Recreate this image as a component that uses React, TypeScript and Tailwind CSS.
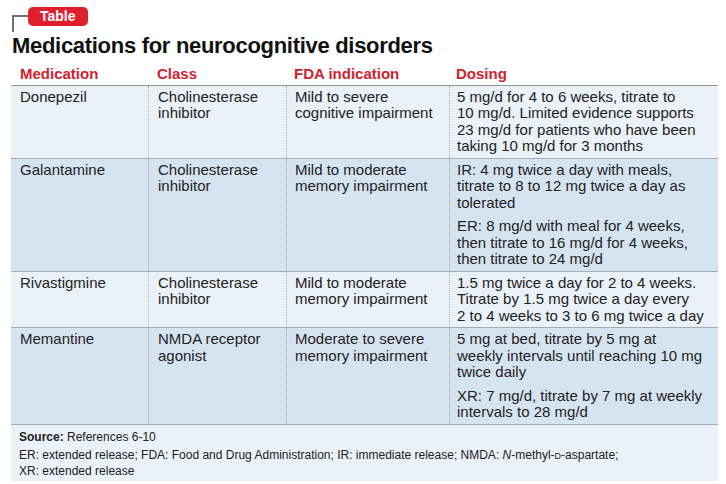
import React from 'react'

type Row = {
    med: string
    cls: string[]
    fda: string[]
    dosing: string[][]
    dark?: boolean
}

const rows: Row[] = [
    {
        med: 'Donepezil',
        cls: ['Cholinesterase', 'inhibitor'],
        fda: ['Mild to severe', 'cognitive impairment'],
        dosing: [
            [
                '5 mg/d for 4 to 6 weeks, titrate to',
                '10 mg/d. Limited evidence supports',
                '23 mg/d for patients who have been',
                'taking 10 mg/d for 3 months',
            ],
        ],
    },
    {
        med: 'Galantamine',
        cls: ['Cholinesterase', 'inhibitor'],
        fda: ['Mild to moderate', 'memory impairment'],
        dosing: [
            [
                'IR: 4 mg twice a day with meals,',
                'titrate to 8 to 12 mg twice a day as',
                'tolerated',
            ],
            [
                'ER: 8 mg/d with meal for 4 weeks,',
                'then titrate to 16 mg/d for 4 weeks,',
                'then titrate to 24 mg/d',
            ],
        ],
        dark: true,
    },
    {
        med: 'Rivastigmine',
        cls: ['Cholinesterase', 'inhibitor'],
        fda: ['Mild to moderate', 'memory impairment'],
        dosing: [
            [
                '1.5 mg twice a day for 2 to 4 weeks.',
                'Titrate by 1.5 mg twice a day every',
                '2 to 4 weeks to 3 to 6 mg twice a day',
            ],
        ],
    },
    {
        med: 'Memantine',
        cls: ['NMDA receptor', 'agonist'],
        fda: ['Moderate to severe', 'memory impairment'],
        dosing: [
            [
                '5 mg at bed, titrate by 5 mg at',
                'weekly intervals until reaching 10 mg',
                'twice daily',
            ],
            ['XR: 7 mg/d, titrate by 7 mg at weekly', 'intervals to 28 mg/d'],
        ],
        dark: true,
    },
]

function Lines({ lines }: { lines: string[] }) {
    return (
        <>
            {lines.map((l) => (
                <div key={l} className="whitespace-nowrap">
                    {l}
                </div>
            ))}
        </>
    )
}

export default function App() {
    return (
        <div className="w-[726px] h-[484px] bg-white font-['Liberation_Sans',Arial,sans-serif] text-[#222]">
            {/* Label + bracket */}
            <div className="flex pl-[12px] pt-[7px]">
                <div className="mt-[8px] w-[16px] h-[17px] border-l-2 border-t-2 border-[#707070]" />
                <div className="h-[19px] px-[12px] rounded-[5px] bg-[#e01f2d] text-white text-[14px] font-bold leading-[19px]">
                    Table
                </div>
            </div>

            {/* Title */}
            <h1 className="mt-[1px] pl-[12px] text-[22px] font-bold leading-[25px] text-[#111] tracking-[-0.3px]">
                Medications for neurocognitive disorders
            </h1>

            {/* Table */}
            <div className="ml-[11px] mt-[3px] w-[707px] text-[15px] leading-[16.5px]">
                <div className="grid grid-cols-[137px_138px_163px_269px] border-b border-[#8e959c] pt-[5px] pb-[2px] font-bold text-[#d11f2f]">
                    <div className="pl-[9px]">Medication</div>
                    <div className="pl-[9px]">Class</div>
                    <div className="pl-[8px]">FDA indication</div>
                    <div className="pl-[7px]">Dosing</div>
                </div>

                {rows.map((r) => (
                    <div
                        key={r.med}
                        className={`grid grid-cols-[137px_138px_163px_269px] border-b border-[#a3adb8] ${
                            r.dark ? 'bg-[#d6e4f2]' : 'bg-[#eaf1f8]'
                        }`}>
                        <div className="pl-[9px] pt-[3px] pb-[3px]">{r.med}</div>
                        <div className="pl-[9px] pt-[3px] pb-[3px] border-l border-dotted border-[#a7b0ba]">
                            <Lines lines={r.cls} />
                        </div>
                        <div className="pl-[8px] pt-[3px] pb-[3px] border-l border-dotted border-[#a7b0ba]">
                            <Lines lines={r.fda} />
                        </div>
                        <div className="pl-[7px] pt-[3px] pb-[3px] border-l border-dotted border-[#a7b0ba] flex flex-col gap-[7px]">
                            {r.dosing.map((p, i) => (
                                <div key={i}>
                                    <Lines lines={p} />
                                </div>
                            ))}
                        </div>
                    </div>
                ))}

                {/* Footnotes */}
                <div className="bg-[#eaf1f8] pl-[8px] pt-[5px] pb-[2px] text-[12px] leading-[15px]">
                    <div>
                        <span className="font-bold">Source:</span> References
                        6-10
                    </div>
                    <div className="mt-[3px]">
                        ER: extended release; FDA: Food and Drug
                        Administration; IR: immediate release; NMDA:{' '}
                        <i>N</i>-methyl-<span className="text-[9px]">D</span>
                        -aspartate;
                    </div>
                    <div>XR: extended release</div>
                </div>
            </div>
        </div>
    )
}
